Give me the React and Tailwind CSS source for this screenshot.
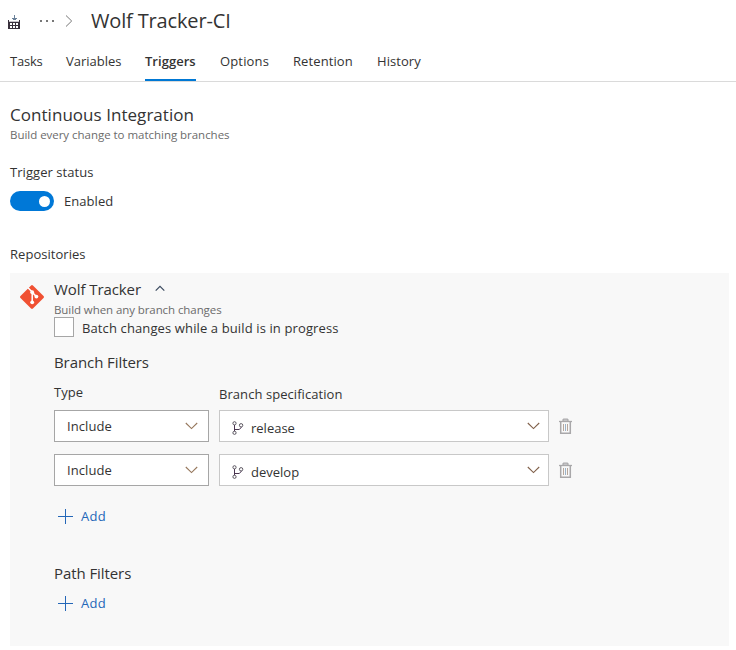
const tabs = [
  { name: "Tasks", cls: "w-8 tracking-[-0.2px]" },
  { name: "Variables", cls: "w-[55px]" },
  { name: "Triggers", cls: "w-[51px] border-b-2 border-[#0078d4] font-semibold tracking-[0.03px]" },
  { name: "Options", cls: "w-[49px] tracking-[0.15px]" },
  { name: "Retention", cls: "w-[60px] tracking-[0.1px]" },
  { name: "History", cls: "w-[45px] tracking-[0.05px]" },
];

function BuildIcon() {
  return (
    <svg width="12" height="14" viewBox="0 0 12 14" className="mt-0.5 shrink-0" shapeRendering="crispEdges">
      <path d="M6 0h1v5H6zM4 3h5v1H4zM5 4h3v1H5z" fill="#6b8199" />
      <path d="M0 5h1v2h10V5h1v9H0z" fill="#38303c" />
      <path d="M1 6h10v1H1z" fill="#c9c5cc" />
      <path d="M2 8h2v2H2zM5 8h2v2H5zM8 8h2v2H8zM2 11h2v2H2zM5 11h2v2H5zM8 11h2v2H8z" fill="#fff" />
    </svg>
  );
}

function Chevron({ className }) {
  return (
    <svg width="13" height="8" viewBox="0 0 13 8" className={className} fill="none" stroke="currentColor" strokeWidth="1.1">
      <path d="M.8 1l5.7 5.6L12.2 1" />
    </svg>
  );
}

function GitIcon() {
  return (
    <svg width="24" height="24" viewBox="0 0 24 24" className="shrink-0">
      <rect x="3.2" y="3.2" width="17.6" height="17.6" rx="1.3" transform="rotate(45 12 12)" fill="#f05133" />
      <g stroke="#fff" strokeWidth="1.5" fill="none">
        <path d="M8 2.8L12.2 7V18M12.2 7.4l4 4" />
      </g>
      <g fill="#fff">
        <circle cx="12.2" cy="7.2" r="1.9" />
        <circle cx="16.4" cy="11.6" r="1.9" />
        <circle cx="12.2" cy="17.3" r="1.9" />
      </g>
    </svg>
  );
}

function BranchIcon() {
  return (
    <svg width="12" height="14" viewBox="0 0 12 14" className="shrink-0" fill="none" stroke="#5b5660" strokeWidth="1">
      <circle cx="2.5" cy="2.3" r="1.6" />
      <circle cx="9.1" cy="4.3" r="1.7" />
      <circle cx="2.5" cy="11.8" r="1.6" />
      <path d="M2.5 4v6.2M9.1 6v.6L7.3 8.5H2.5" stroke="#4a3550" />
    </svg>
  );
}

function TrashIcon() {
  return (
    <svg width="13" height="16" viewBox="0 0 13 16" className="shrink-0" fill="none" stroke="#a9a8aa">
      <path d="M0 3.5h13" strokeWidth="1.3" />
      <path d="M4 3V1.7L4.7 1h3.6l.7.7V3" fill="#c4c4c6" strokeWidth="1.2" />
      <path d="M1.7 4v11.3h9.6V4" strokeWidth="1.5" />
      <path d="M4.5 6v7M8.5 6v7" stroke="#b7a79c" />
      <path d="M6.5 6v7" stroke="#9bb3c8" />
    </svg>
  );
}

function AddLink() {
  return (
    <div className="flex h-5 items-center text-[#2467b8]">
      <svg width="15" height="15" viewBox="0 0 15 15" className="ml-1 mr-2 shrink-0" fill="none" stroke="currentColor">
        <path d="M7.5 0v15M0 7.5h15" />
      </svg>
      <span className="tracking-[0.3px]">Add</span>
    </div>
  );
}

function FilterRow({ branch }) {
  return (
    <div className="flex h-8 items-center">
      <div className="flex h-8 w-[155px] items-center justify-between border border-[#a6a6a6] bg-white pl-3 pr-2.5">
        <span className="tracking-[0.08px]">Include</span>
        <Chevron className="text-[#96775c]" />
      </div>
      <div className="ml-2.5 flex h-8 w-[330px] items-center border border-[#c8c8c8] bg-white pl-3 pr-2">
        <span className="flex items-center pt-1">
          <BranchIcon />
          <span className="ml-[7px] leading-4">{branch}</span>
        </span>
        <Chevron className="ml-auto text-[#80604a]" />
      </div>
      <div className="ml-2.5">
        <TrashIcon />
      </div>
    </div>
  );
}

export default function App() {
  return (
    <div className="h-[650px] w-[736px] overflow-hidden whitespace-nowrap bg-white font-['Open_Sans','Noto_Sans',sans-serif] text-[13px] leading-5 text-[#333]">
      <header className="border-b border-[#dadada]">
        <div className="flex h-[42px] items-center pl-2">
          <BuildIcon />
          <div className="ml-5 flex gap-1">
            <i className="size-0.5 bg-[#777]" />
            <i className="size-0.5 bg-[#777]" />
            <i className="size-0.5 bg-[#777]" />
          </div>
          <svg width="8" height="12" viewBox="0 0 8 12" className="ml-[11px]" fill="none" stroke="#777">
            <path d="M1 .5L6.7 6 1 11.5" />
          </svg>
          <h1 className="-mt-px ml-[18px] text-[20px] leading-7 tracking-[-0.15px]">Wolf Tracker-CI</h1>
        </div>
        <nav className="flex h-[39px] gap-6 pl-2.5">
          {tabs.map((t) => (
            <div key={t.name} className={`${t.cls} pt-[9px]`}>
              {t.name}
            </div>
          ))}
        </nav>
      </header>
      <main className="pl-2.5">
        <h2 className="mt-[22px] text-[17px] leading-[22px] tracking-[0.04px]">Continuous Integration</h2>
        <p className="text-[11.5px] leading-[18px] tracking-[-0.03px] text-[#6b6b6b]">Build every change to matching branches</p>
        <p className="mt-[18px] tracking-[0.06px]">Trigger status</p>
        <div className="mt-[9px] flex h-5 items-center">
          <div className="flex h-5 w-11 items-center justify-end rounded-full bg-[#0078d7] pr-1">
            <div className="size-[11px] rounded-full bg-white" />
          </div>
          <span className="ml-2.5 tracking-[0.06px]">Enabled</span>
        </div>
        <p className="mt-[33px] tracking-[0.04px]">Repositories</p>
        <section className="mt-[9px] flex h-[373px] w-[719px] bg-[#f8f8f8] pl-2.5">
          <div className="pt-3">
            <GitIcon />
          </div>
          <div className="ml-2.5 pt-[5px]">
            <div className="flex h-[23px] items-start">
              <h3 className="w-[101px] text-[15px] leading-[22px] tracking-[-0.08px]">Wolf Tracker</h3>
              <svg width="10" height="7" viewBox="0 0 10 7" className="mt-[7px]" fill="none" stroke="#3b4a5f" strokeWidth="1.2">
                <path d="M.7 5.7L5 1.3l4.3 4.4" />
              </svg>
            </div>
            <p className="pt-px text-[11.5px] leading-[15px] tracking-[-0.08px] text-[#6b6b6b]">Build when any branch changes</p>
            <div className="flex h-5 items-center">
              <div className="size-5 border border-[#a6a6a6] bg-white" />
              <span className="ml-2 pt-0.5 tracking-[0.12px]">Batch changes while a build is in progress</span>
            </div>
            <h3 className="mt-3.5 text-[15px] leading-[22px] tracking-[-0.08px]">Branch Filters</h3>
            <div className="mt-[9px] flex h-7">
              <span className="w-[165px]">Type</span>
              <span className="pt-0.5 tracking-[0.06px]">Branch specification</span>
            </div>
            <div className="flex flex-col gap-3">
              <FilterRow branch="release" />
              <FilterRow branch="develop" />
            </div>
            <div className="mt-5">
              <AddLink />
            </div>
            <h3 className="mb-[9px] mt-9 text-[15px] leading-[22px] tracking-[-0.08px]">Path Filters</h3>
            <AddLink />
          </div>
        </section>
      </main>
    </div>
  );
}
